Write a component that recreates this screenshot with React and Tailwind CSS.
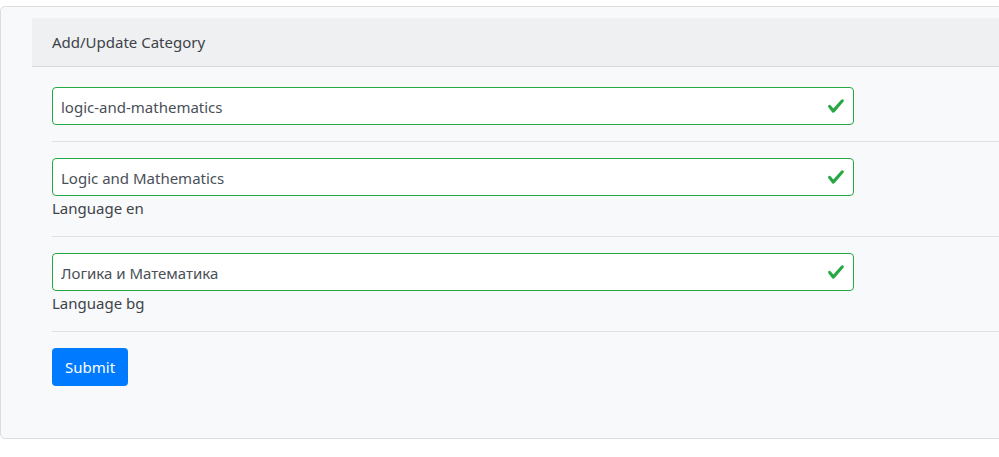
import React from "react";

function Check() {
  return (
    <svg
      className="absolute right-[9px] top-1/2 -translate-y-1/2 w-[18px] h-[18px]"
      viewBox="0 0 8 8"
    >
      <path
        fill="#28a745"
        d="M2.3 6.73L.6 4.53c-.4-1.04.46-1.4 1.1-.8l1.1 1.4 3.4-3.8c.6-.63 1.6-.27 1.2.7l-4 4.6c-.43.5-.8.4-1.1.1z"
      />
    </svg>
  );
}

function Field({ value, label }) {
  return (
    <div>
      <div className="relative w-[802px]">
        <input
          readOnly
          value={value}
          className="w-full h-[38px] bg-white border border-[#28a745] rounded-[4px] pl-[8px] pr-9 pt-[1px] text-[15px] text-[#495057] outline-none"
        />
        <Check />
      </div>
      {label && <div className="text-[15px] text-[#3d4349] leading-[24px]">{label}</div>}
    </div>
  );
}

export default function App() {
  return (
    <div
      className="w-[999px] h-[457px] overflow-hidden bg-white pt-[6px]"
      style={{ fontFamily: '"Noto Sans", "Open Sans", sans-serif' }}
    >
      <div className="w-[1100px] h-[433px] bg-[#f8f9fa] border border-[#dcdde0] rounded-[5px] pt-[11px] pl-[31px]">
        <div className="h-[49px] bg-[#eff0f2] border-b border-[#d6d8db] pl-[20px] flex items-center text-[15px] text-[#3d4349]">
          Add/Update Category
        </div>
        <div className="pl-[20px] pt-[20px]">
          <Field value="logic-and-mathematics" />
          <hr className="border-t border-[#dee2e6] mt-[16px] mb-[16px]" />
          <Field value="Logic and Mathematics" label="Language en" />
          <hr className="border-t border-[#dee2e6] mt-[16px] mb-[16px]" />
          <Field value="Логика и Математика" label="Language bg" />
          <hr className="border-t border-[#dee2e6] mt-[16px] mb-[16px]" />
          <button className="bg-[#007bff] text-white text-[15px] rounded-[4px] h-[38px] px-[13px]">
            Submit
          </button>
        </div>
      </div>
    </div>
  );
}
